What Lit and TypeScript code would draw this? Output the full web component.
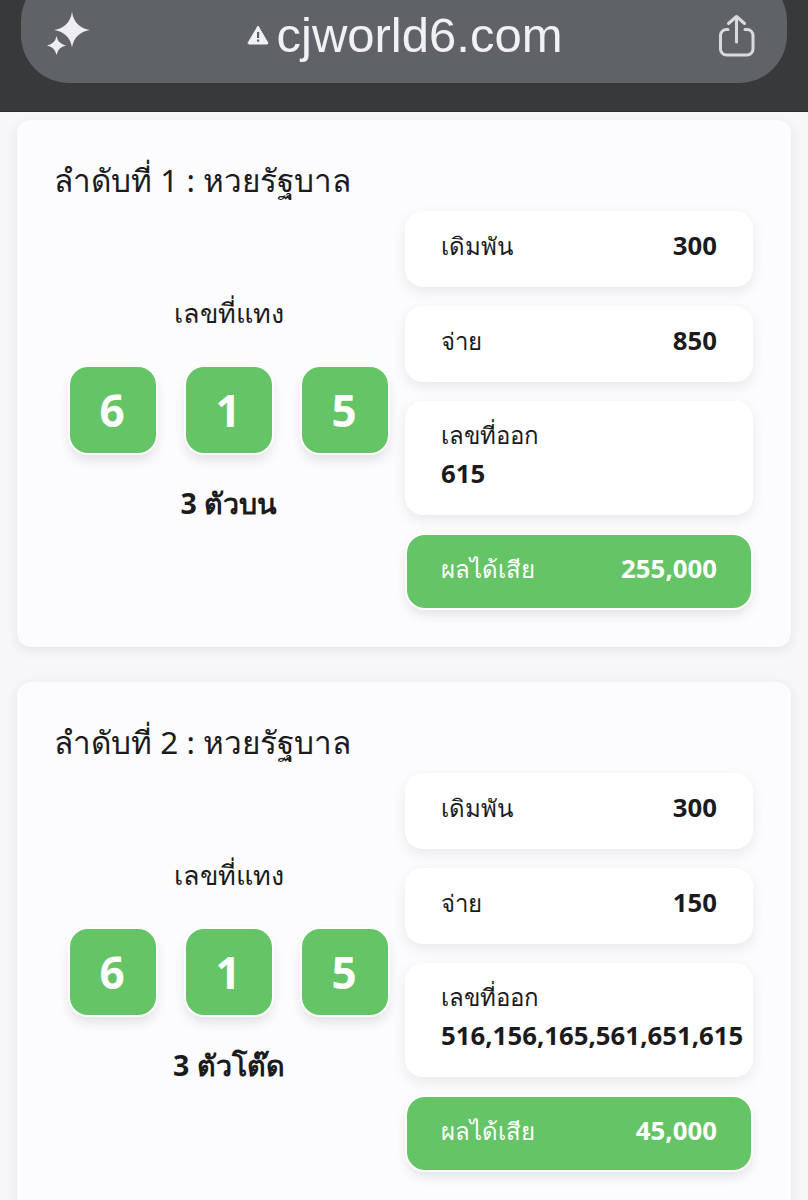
import { LitElement, css, html } from "lit";
import { customElement, property } from "lit/decorators.js";

@customElement("bet-card")
export class BetCard extends LitElement {
  static styles = css`
    :host {
      display: block;
    }

    .card {
      background: #fcfcfe;
      border-radius: 14px;
      box-shadow: 0 3px 12px rgba(40, 40, 60, 0.09);
      padding: 38px 38px 38px 37px;
    }

    .title {
      font-size: 31.5px;
      line-height: 44px;
      color: #1b1b1d;
      margin: 0 0 9px;
      font-weight: 400;
    }

    .body {
      display: grid;
      grid-template-columns: 350px 348px;
      column-gap: 1px;
    }

    .left {
      display: flex;
      flex-direction: column;
      align-items: center;
      justify-content: center;
      padding-bottom: 4px;
    }

    .pick-label {
      font-size: 27px;
      line-height: 40px;
      color: #1b1b1d;
    }

    .tiles {
      display: flex;
      gap: 30px;
      margin: 34px 0 30px;
    }

    .tile {
      width: 86px;
      height: 86px;
      background: #65c466;
      border-radius: 18px;
      color: #fff;
      font-size: 44px;
      font-weight: 700;
      display: flex;
      align-items: center;
      justify-content: center;
      box-shadow: 0 0 0 2px #fff, 0 7px 12px rgba(40, 40, 60, 0.13);
    }

    .tile span {
      margin: 0 2px 0 0;
    }

    .kind {
      font-size: 28.6px;
      font-weight: 700;
      line-height: 40px;
      color: #1b1b1d;
    }

    .right {
      display: flex;
      flex-direction: column;
      gap: 19px;
    }

    .row {
      background: #fff;
      border-radius: 18px;
      box-shadow: 0 5px 14px rgba(40, 40, 60, 0.09);
      box-sizing: border-box;
      padding: 0 36px 5px;
      height: 76px;
      display: flex;
      align-items: center;
      justify-content: space-between;
      font-size: 24px;
      color: #1b1b1d;
    }

    .row b {
      font-size: 25.8px;
      font-weight: 700;
      margin-bottom: 3px;
    }

    .row.stack {
      height: 114px;
      flex-direction: column;
      align-items: flex-start;
      justify-content: center;
      padding-bottom: 10px;
      white-space: nowrap;
    }

    .row.stack b {
      margin-bottom: 0;
    }

    .row.result {
      background: #65c466;
      color: #fff;
      height: 73px;
      margin: 1px 2px;
      box-shadow: 0 0 0 2px #fff, 0 6px 12px rgba(40, 40, 60, 0.13);
      padding: 0 34px 5px;
    }
  `;

  @property() heading = "";
  @property() kind = "";
  @property() pay = "";
  @property() drawn = "";
  @property() net = "";

  render() {
    return html`
      <section class="card">
        <h2 class="title">${this.heading}</h2>
        <div class="body">
          <div class="left">
            <div class="pick-label">เลขที่แทง</div>
            <div class="tiles">
              ${["6", "1", "5"].map((d) => html`<div class="tile"><span>${d}</span></div>`)}
            </div>
            <div class="kind">${this.kind}</div>
          </div>
          <div class="right">
            <div class="row"><span>เดิมพัน</span><b>300</b></div>
            <div class="row"><span>จ่าย</span><b>${this.pay}</b></div>
            <div class="row stack"><span>เลขที่ออก</span><b>${this.drawn}</b></div>
            <div class="row result"><span>ผลได้เสีย</span><b>${this.net}</b></div>
          </div>
        </div>
      </section>
    `;
  }
}

@customElement("app-root")
export class AppRoot extends LitElement {
  static styles = css`
    :host {
      display: block;
      height: 1200px;
      overflow: hidden;
      background: #f7f7fa;
      font-family: "Noto Sans", "Open Sans", sans-serif;
    }

    .bar {
      height: 112px;
      box-sizing: border-box;
      background: #38393b;
      border-bottom: 1px solid #2a2a2c;
      overflow: hidden;
      padding: 0 21px 28px;
      display: flex;
      align-items: flex-end;
    }

    .pill {
      flex: 1;
      height: 110px;
      flex-shrink: 0;
      background: #5f6266;
      border-radius: 48px;
      display: flex;
      align-items: flex-end;
      justify-content: space-between;
      padding: 0 31px 0 26px;
      color: #f1f1f4;
    }

    .pill svg {
      display: block;
    }

    .spark {
      margin-bottom: 27px;
    }

    .share {
      margin-bottom: 25px;
    }

    .url {
      display: flex;
      align-items: center;
      gap: 8px;
      margin-bottom: 16px;
      font-family: "Liberation Sans", Arial, sans-serif;
      font-size: 49px;
      line-height: 64px;
    }

    .cards {
      display: flex;
      flex-direction: column;
      gap: 35px;
      padding: 8px 17px 0;
    }
  `;

  render() {
    return html`
      <header class="bar">
        <div class="pill">
          <svg class="spark" width="44" height="44" viewBox="0 0 44 44" fill="#eeeef2">
            <path d="M25 0Q27.500 15.500 43 18Q27.500 20.500 25 35.500Q22.500 20.500 7 18Q22.500 15.500 25 0Z" />
            <path d="M9.500 24Q11 32 19 33.500Q11 35 9.500 43Q8 35 0 33.500Q8 32 9.500 24Z" />
          </svg>
          <div class="url">
            <svg width="22" height="20" viewBox="0 0 22 20">
              <path d="M11 1 21 18a1 1 0 0 1-1 1H2a1 1 0 0 1-1-1z" fill="currentColor" stroke="currentColor" stroke-linejoin="round" />
              <rect x="10" y="7" width="2.200" height="6" fill="#5f6266" />
              <rect x="10" y="14.500" width="2.200" height="2.200" fill="#5f6266" />
            </svg>
            cjworld6.com
          </div>
          <svg class="share" width="38" height="44" viewBox="0 0 38 44" fill="none" stroke="#d9dade" stroke-width="3" stroke-linecap="round" stroke-linejoin="round">
            <path d="M10 15.500H8.500a6 6 0 0 0-6 6V35a6 6 0 0 0 6 6h20.500a6 6 0 0 0 6-6V21.500a6 6 0 0 0-6-6H27" />
            <path d="M18.500 28V2.500M10.500 9.500l8-7 8 7" />
          </svg>
        </div>
      </header>
      <main class="cards">
        <bet-card heading="ลำดับที่ 1 : หวยรัฐบาล" kind="3 ตัวบน" pay="850" drawn="615" net="255,000"></bet-card>
        <bet-card heading="ลำดับที่ 2 : หวยรัฐบาล" kind="3 ตัวโต๊ด" pay="150" drawn="516,156,165,561,651,615" net="45,000"></bet-card>
      </main>
    `;
  }
}
